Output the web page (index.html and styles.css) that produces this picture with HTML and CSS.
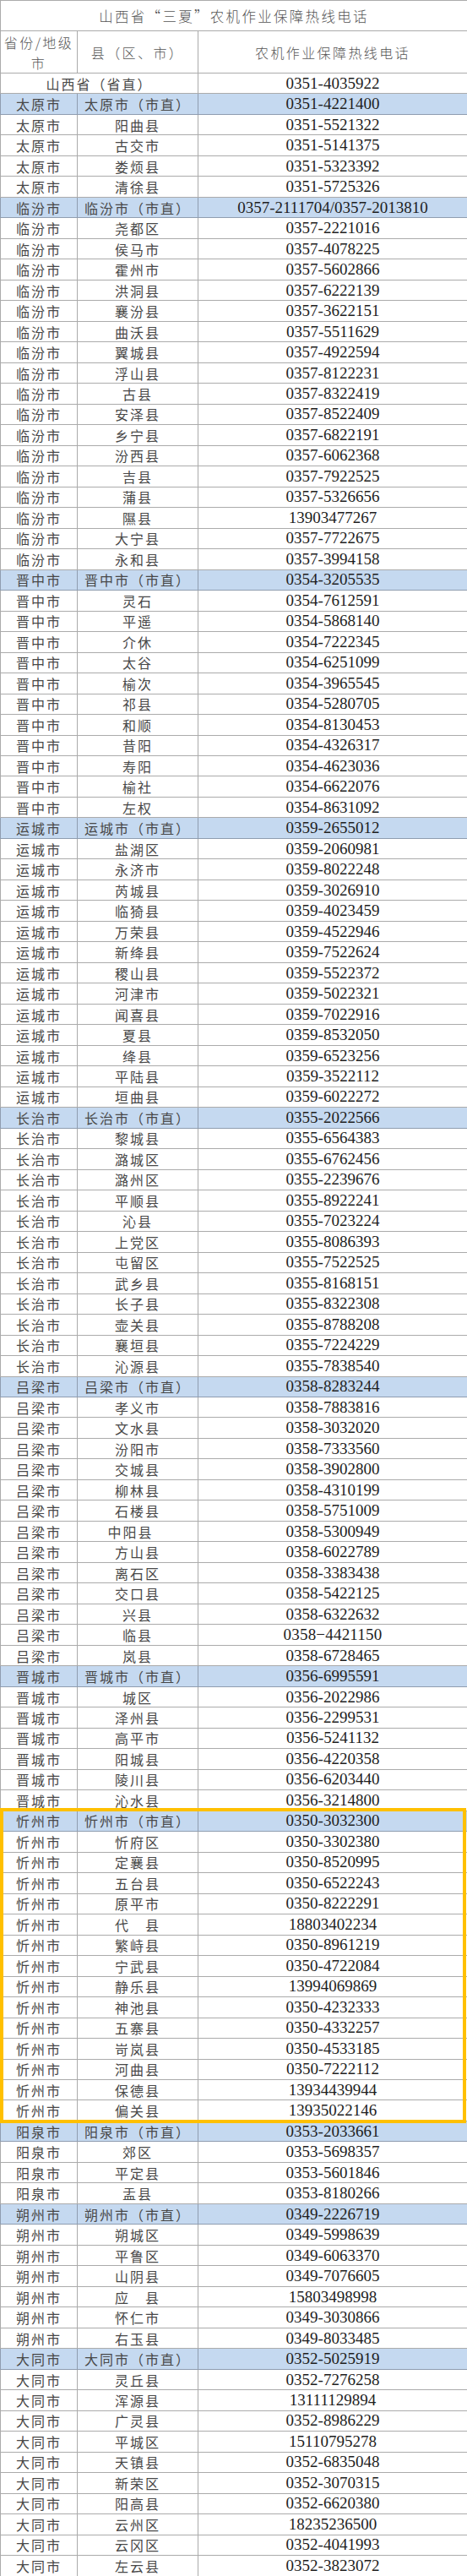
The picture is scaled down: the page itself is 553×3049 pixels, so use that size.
FILE: index.html
```html
<!DOCTYPE html>
<html lang="zh-CN">
<head>
<meta charset="utf-8">
<title>山西省“三夏”农机作业保障热线电话</title>
<link rel="stylesheet" href="styles.css">
</head>
<body>
<div class="sheet">
<table class="hotline">
<colgroup><col class="c1"><col class="c2"><col class="c3"></colgroup>
<thead>
<tr class="title"><th colspan="3">山西省“三夏”农机作业保障热线电话</th></tr>
<tr class="head"><th>省份/地级<br>市</th><th>县（区、市）</th><th>农机作业保障热线电话</th></tr>
</thead>
<tbody>
<tr><td class="cn" colspan="2">山西省（省直）</td><td class="tel">0351-4035922</td></tr>
<tr class="hl"><td class="cn">太原市</td><td class="cn">太原市（市直）</td><td class="tel">0351-4221400</td></tr>
<tr><td class="cn">太原市</td><td class="cn">阳曲县</td><td class="tel">0351-5521322</td></tr>
<tr><td class="cn">太原市</td><td class="cn">古交市</td><td class="tel">0351-5141375</td></tr>
<tr><td class="cn">太原市</td><td class="cn">娄烦县</td><td class="tel">0351-5323392</td></tr>
<tr><td class="cn">太原市</td><td class="cn">清徐县</td><td class="tel">0351-5725326</td></tr>
<tr class="hl"><td class="cn">临汾市</td><td class="cn">临汾市（市直）</td><td class="tel">0357-2111704/0357-2013810</td></tr>
<tr><td class="cn">临汾市</td><td class="cn">尧都区</td><td class="tel">0357-2221016</td></tr>
<tr><td class="cn">临汾市</td><td class="cn">侯马市</td><td class="tel">0357-4078225</td></tr>
<tr><td class="cn">临汾市</td><td class="cn">霍州市</td><td class="tel">0357-5602866</td></tr>
<tr><td class="cn">临汾市</td><td class="cn">洪洞县</td><td class="tel">0357-6222139</td></tr>
<tr><td class="cn">临汾市</td><td class="cn">襄汾县</td><td class="tel">0357-3622151</td></tr>
<tr><td class="cn">临汾市</td><td class="cn">曲沃县</td><td class="tel">0357-5511629</td></tr>
<tr><td class="cn">临汾市</td><td class="cn">翼城县</td><td class="tel">0357-4922594</td></tr>
<tr><td class="cn">临汾市</td><td class="cn">浮山县</td><td class="tel">0357-8122231</td></tr>
<tr><td class="cn">临汾市</td><td class="cn">古县</td><td class="tel">0357-8322419</td></tr>
<tr><td class="cn">临汾市</td><td class="cn">安泽县</td><td class="tel">0357-8522409</td></tr>
<tr><td class="cn">临汾市</td><td class="cn">乡宁县</td><td class="tel">0357-6822191</td></tr>
<tr><td class="cn">临汾市</td><td class="cn">汾西县</td><td class="tel">0357-6062368</td></tr>
<tr><td class="cn">临汾市</td><td class="cn">吉县</td><td class="tel">0357-7922525</td></tr>
<tr><td class="cn">临汾市</td><td class="cn">蒲县</td><td class="tel">0357-5326656</td></tr>
<tr><td class="cn">临汾市</td><td class="cn">隰县</td><td class="tel">13903477267</td></tr>
<tr><td class="cn">临汾市</td><td class="cn">大宁县</td><td class="tel">0357-7722675</td></tr>
<tr><td class="cn">临汾市</td><td class="cn">永和县</td><td class="tel">0357-3994158</td></tr>
<tr class="hl"><td class="cn">晋中市</td><td class="cn">晋中市（市直）</td><td class="tel">0354-3205535</td></tr>
<tr><td class="cn">晋中市</td><td class="cn">灵石</td><td class="tel">0354-7612591</td></tr>
<tr><td class="cn">晋中市</td><td class="cn">平遥</td><td class="tel">0354-5868140</td></tr>
<tr><td class="cn">晋中市</td><td class="cn">介休</td><td class="tel">0354-7222345</td></tr>
<tr><td class="cn">晋中市</td><td class="cn">太谷</td><td class="tel">0354-6251099</td></tr>
<tr><td class="cn">晋中市</td><td class="cn">榆次</td><td class="tel">0354-3965545</td></tr>
<tr><td class="cn">晋中市</td><td class="cn">祁县</td><td class="tel">0354-5280705</td></tr>
<tr><td class="cn">晋中市</td><td class="cn">和顺</td><td class="tel">0354-8130453</td></tr>
<tr><td class="cn">晋中市</td><td class="cn">昔阳</td><td class="tel">0354-4326317</td></tr>
<tr><td class="cn">晋中市</td><td class="cn">寿阳</td><td class="tel">0354-4623036</td></tr>
<tr><td class="cn">晋中市</td><td class="cn">榆社</td><td class="tel">0354-6622076</td></tr>
<tr><td class="cn">晋中市</td><td class="cn">左权</td><td class="tel">0354-8631092</td></tr>
<tr class="hl"><td class="cn">运城市</td><td class="cn">运城市（市直）</td><td class="tel">0359-2655012</td></tr>
<tr><td class="cn">运城市</td><td class="cn">盐湖区</td><td class="tel">0359-2060981</td></tr>
<tr><td class="cn">运城市</td><td class="cn">永济市</td><td class="tel">0359-8022248</td></tr>
<tr><td class="cn">运城市</td><td class="cn">芮城县</td><td class="tel">0359-3026910</td></tr>
<tr><td class="cn">运城市</td><td class="cn">临猗县</td><td class="tel">0359-4023459</td></tr>
<tr><td class="cn">运城市</td><td class="cn">万荣县</td><td class="tel">0359-4522946</td></tr>
<tr><td class="cn">运城市</td><td class="cn">新绛县</td><td class="tel">0359-7522624</td></tr>
<tr><td class="cn">运城市</td><td class="cn">稷山县</td><td class="tel">0359-5522372</td></tr>
<tr><td class="cn">运城市</td><td class="cn">河津市</td><td class="tel">0359-5022321</td></tr>
<tr><td class="cn">运城市</td><td class="cn">闻喜县</td><td class="tel">0359-7022916</td></tr>
<tr><td class="cn">运城市</td><td class="cn">夏县</td><td class="tel">0359-8532050</td></tr>
<tr><td class="cn">运城市</td><td class="cn">绛县</td><td class="tel">0359-6523256</td></tr>
<tr><td class="cn">运城市</td><td class="cn">平陆县</td><td class="tel">0359-3522112</td></tr>
<tr><td class="cn">运城市</td><td class="cn">垣曲县</td><td class="tel">0359-6022272</td></tr>
<tr class="hl"><td class="cn">长治市</td><td class="cn">长治市（市直）</td><td class="tel">0355-2022566</td></tr>
<tr><td class="cn">长治市</td><td class="cn">黎城县</td><td class="tel">0355-6564383</td></tr>
<tr><td class="cn">长治市</td><td class="cn">潞城区</td><td class="tel">0355-6762456</td></tr>
<tr><td class="cn">长治市</td><td class="cn">潞州区</td><td class="tel">0355-2239676</td></tr>
<tr><td class="cn">长治市</td><td class="cn">平顺县</td><td class="tel">0355-8922241</td></tr>
<tr><td class="cn">长治市</td><td class="cn">沁县</td><td class="tel">0355-7023224</td></tr>
<tr><td class="cn">长治市</td><td class="cn">上党区</td><td class="tel">0355-8086393</td></tr>
<tr><td class="cn">长治市</td><td class="cn">屯留区</td><td class="tel">0355-7522525</td></tr>
<tr><td class="cn">长治市</td><td class="cn">武乡县</td><td class="tel">0355-8168151</td></tr>
<tr><td class="cn">长治市</td><td class="cn">长子县</td><td class="tel">0355-8322308</td></tr>
<tr><td class="cn">长治市</td><td class="cn">壶关县</td><td class="tel">0355-8788208</td></tr>
<tr><td class="cn">长治市</td><td class="cn">襄垣县</td><td class="tel">0355-7224229</td></tr>
<tr><td class="cn">长治市</td><td class="cn">沁源县</td><td class="tel">0355-7838540</td></tr>
<tr class="hl"><td class="cn">吕梁市</td><td class="cn">吕梁市（市直）</td><td class="tel">0358-8283244</td></tr>
<tr><td class="cn">吕梁市</td><td class="cn">孝义市</td><td class="tel">0358-7883816</td></tr>
<tr><td class="cn">吕梁市</td><td class="cn">文水县</td><td class="tel">0358-3032020</td></tr>
<tr><td class="cn">吕梁市</td><td class="cn">汾阳市</td><td class="tel">0358-7333560</td></tr>
<tr><td class="cn">吕梁市</td><td class="cn">交城县</td><td class="tel">0358-3902800</td></tr>
<tr><td class="cn">吕梁市</td><td class="cn">柳林县</td><td class="tel">0358-4310199</td></tr>
<tr><td class="cn">吕梁市</td><td class="cn">石楼县</td><td class="tel">0358-5751009</td></tr>
<tr><td class="cn">吕梁市</td><td class="cn shift">中阳县</td><td class="tel">0358-5300949</td></tr>
<tr><td class="cn">吕梁市</td><td class="cn">方山县</td><td class="tel">0358-6022789</td></tr>
<tr><td class="cn">吕梁市</td><td class="cn">离石区</td><td class="tel">0358-3383438</td></tr>
<tr><td class="cn">吕梁市</td><td class="cn">交口县</td><td class="tel">0358-5422125</td></tr>
<tr><td class="cn">吕梁市</td><td class="cn">兴县</td><td class="tel">0358-6322632</td></tr>
<tr><td class="cn">吕梁市</td><td class="cn">临县</td><td class="tel wide">0358−4421150</td></tr>
<tr><td class="cn">吕梁市</td><td class="cn">岚县</td><td class="tel">0358-6728465</td></tr>
<tr class="hl"><td class="cn">晋城市</td><td class="cn">晋城市（市直）</td><td class="tel">0356-6995591</td></tr>
<tr><td class="cn">晋城市</td><td class="cn">城区</td><td class="tel">0356-2022986</td></tr>
<tr><td class="cn">晋城市</td><td class="cn">泽州县</td><td class="tel">0356-2299531</td></tr>
<tr><td class="cn">晋城市</td><td class="cn">高平市</td><td class="tel">0356-5241132</td></tr>
<tr><td class="cn">晋城市</td><td class="cn">阳城县</td><td class="tel">0356-4220358</td></tr>
<tr><td class="cn">晋城市</td><td class="cn">陵川县</td><td class="tel">0356-6203440</td></tr>
<tr><td class="cn">晋城市</td><td class="cn">沁水县</td><td class="tel">0356-3214800</td></tr>
<tr class="hl"><td class="cn">忻州市</td><td class="cn">忻州市（市直）</td><td class="tel">0350-3032300</td></tr>
<tr><td class="cn">忻州市</td><td class="cn">忻府区</td><td class="tel">0350-3302380</td></tr>
<tr><td class="cn">忻州市</td><td class="cn">定襄县</td><td class="tel">0350-8520995</td></tr>
<tr><td class="cn">忻州市</td><td class="cn">五台县</td><td class="tel">0350-6522243</td></tr>
<tr><td class="cn">忻州市</td><td class="cn">原平市</td><td class="tel">0350-8222291</td></tr>
<tr><td class="cn">忻州市</td><td class="cn">代　县</td><td class="tel">18803402234</td></tr>
<tr><td class="cn">忻州市</td><td class="cn">繁峙县</td><td class="tel">0350-8961219</td></tr>
<tr><td class="cn">忻州市</td><td class="cn">宁武县</td><td class="tel">0350-4722084</td></tr>
<tr><td class="cn">忻州市</td><td class="cn">静乐县</td><td class="tel">13994069869</td></tr>
<tr><td class="cn">忻州市</td><td class="cn">神池县</td><td class="tel">0350-4232333</td></tr>
<tr><td class="cn">忻州市</td><td class="cn">五寨县</td><td class="tel">0350-4332257</td></tr>
<tr><td class="cn">忻州市</td><td class="cn">岢岚县</td><td class="tel">0350-4533185</td></tr>
<tr><td class="cn">忻州市</td><td class="cn">河曲县</td><td class="tel">0350-7222112</td></tr>
<tr><td class="cn">忻州市</td><td class="cn">保德县</td><td class="tel">13934439944</td></tr>
<tr><td class="cn">忻州市</td><td class="cn">偏关县</td><td class="tel">13935022146</td></tr>
<tr class="hl"><td class="cn">阳泉市</td><td class="cn">阳泉市（市直）</td><td class="tel">0353-2033661</td></tr>
<tr><td class="cn">阳泉市</td><td class="cn">郊区</td><td class="tel">0353-5698357</td></tr>
<tr><td class="cn">阳泉市</td><td class="cn">平定县</td><td class="tel">0353-5601846</td></tr>
<tr><td class="cn">阳泉市</td><td class="cn">盂县</td><td class="tel">0353-8180266</td></tr>
<tr class="hl"><td class="cn">朔州市</td><td class="cn">朔州市（市直）</td><td class="tel">0349-2226719</td></tr>
<tr><td class="cn">朔州市</td><td class="cn">朔城区</td><td class="tel">0349-5998639</td></tr>
<tr><td class="cn">朔州市</td><td class="cn">平鲁区</td><td class="tel">0349-6063370</td></tr>
<tr><td class="cn">朔州市</td><td class="cn">山阴县</td><td class="tel">0349-7076605</td></tr>
<tr><td class="cn">朔州市</td><td class="cn">应　县</td><td class="tel">15803498998</td></tr>
<tr><td class="cn">朔州市</td><td class="cn">怀仁市</td><td class="tel">0349-3030866</td></tr>
<tr><td class="cn">朔州市</td><td class="cn">右玉县</td><td class="tel">0349-8033485</td></tr>
<tr class="hl"><td class="cn">大同市</td><td class="cn">大同市（市直）</td><td class="tel">0352-5025919</td></tr>
<tr><td class="cn">大同市</td><td class="cn">灵丘县</td><td class="tel">0352-7276258</td></tr>
<tr><td class="cn">大同市</td><td class="cn">浑源县</td><td class="tel">13111129894</td></tr>
<tr><td class="cn">大同市</td><td class="cn">广灵县</td><td class="tel">0352-8986229</td></tr>
<tr><td class="cn">大同市</td><td class="cn">平城区</td><td class="tel">15110795278</td></tr>
<tr><td class="cn">大同市</td><td class="cn">天镇县</td><td class="tel">0352-6835048</td></tr>
<tr><td class="cn">大同市</td><td class="cn">新荣区</td><td class="tel">0352-3070315</td></tr>
<tr><td class="cn">大同市</td><td class="cn">阳高县</td><td class="tel">0352-6620380</td></tr>
<tr><td class="cn">大同市</td><td class="cn">云州区</td><td class="tel">18235236500</td></tr>
<tr><td class="cn">大同市</td><td class="cn">云冈区</td><td class="tel">0352-4041993</td></tr>
<tr><td class="cn">大同市</td><td class="cn">左云县</td><td class="tel">0352-3823072</td></tr>
</tbody>
</table>
<div class="focus"></div>
</div>
</body>
</html>
```

FILE: styles.css
```css
html, body {
  margin: 0;
  padding: 0;
  background: #ffffff;
}

.sheet {
  position: relative;
  width: 553px;
}

.hotline {
  width: 553px;
  border-collapse: collapse;
  table-layout: fixed;
  font-family: "Liberation Serif", "Noto Sans CJK SC", serif;
}

.hotline col.c1 { width: 91px; }
.hotline col.c2 { width: 143px; }
.hotline col.c3 { width: 319px; }

.hotline th,
.hotline td {
  border: 1px solid #ababab;
  padding: 0;
  text-align: center;
  vertical-align: middle;
  font-weight: normal;
  white-space: nowrap;
  overflow: hidden;
}

.title th {
  height: 35px;
  font-family: "Noto Sans CJK SC", sans-serif;
  font-weight: 300;
  font-size: 16.5px;
  letter-spacing: 2.3px;
  color: #555555;
}

.head th {
  height: 49px;
  font-family: "Noto Sans CJK SC", sans-serif;
  font-weight: 300;
  font-size: 16px;
  letter-spacing: 2.4px;
  line-height: 24px;
  color: #555555;
}

.hotline tbody tr {
  height: 24.49px;
}

.cn {
  font-family: "Noto Sans CJK SC", sans-serif;
  font-size: 16px;
  font-weight: 300;
  letter-spacing: 2px;
  line-height: 20px;
  color: #484848;
}

.cn.shift {
  padding-right: 17px;
}

.tel {
  font-size: 19px;
  line-height: 20px;
  color: #1e1e1e;
}

.tel.wide {
  letter-spacing: 0.2px;
}

.hotline tr.hl td {
  background: #c5d9f0;
  border-color: #8f9db0;
}

.focus {
  position: absolute;
  left: 0;
  top: 2140px;
  width: 552px;
  height: 373px;
  box-sizing: border-box;
  border: 4px solid #ffc000;
  pointer-events: none;
}
```
